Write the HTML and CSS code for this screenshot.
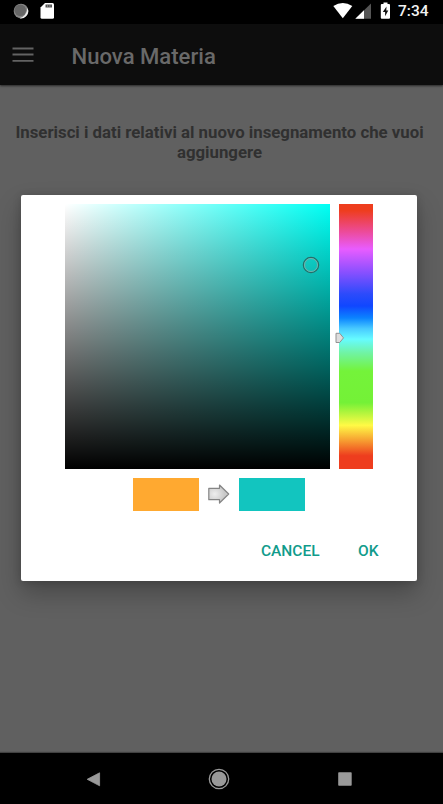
FILE: index.html
```
<!DOCTYPE html>
<html lang="it">
<head>
<meta charset="utf-8">
<title>Nuova Materia</title>
<link rel="stylesheet" href="styles.css">
</head>
<body>
<div class="screen">
  <header class="status">
    <svg class="status-left" width="60" height="24" viewBox="0 0 60 24">
      <circle cx="21" cy="11" r="7.3" fill="#888"/>
      <path d="M27.500 8a7.300 7.300 0 0 1-8 10.300q7-2 8-10.300z" fill="#eee"/>
      <circle cx="20.300" cy="10.300" r="5.800" fill="#666"/>
      <path d="M45 3h7.500q1.500 0 1.500 1.500v12.700q0 1.500-1.500 1.500h-10.500q-1.500 0-1.500-1.500v-9.700z" fill="#fff"/>
      <path d="M45.500 4.500h6.500v3h-6.500z" fill="#555"/>
      <path d="M47.500 4.500v3M49.900 4.500v3" stroke="#aaa" stroke-width=".6"/>
    </svg>
    <svg class="status-right" width="60" height="24" viewBox="0 0 60 24">
      <path d="M.3 6Q9.800 0 19.300 6L9.800 18.200z" fill="#fff"/>
      <path d="M22.300 18.800L38 3.500v15.300z" fill="#555"/>
      <path d="M22.300 18.800L31 10.300v8.500z" fill="#fff"/>
      <path d="M50.500 2.500h4v1.400h1.500q1 0 1 1v12.900q0 1-1 1h-7.200q-1 0-1-1V4.900q0-1 1-1h1.700z" fill="#fff"/>
      <path d="M53.500 6.400l-3.700 5.500h2.300v4.400l3.200-5.700h-2z" fill="#111"/>
    </svg>
    <span class="clock">7:34</span>
  </header>
  <div class="appbar">
    <svg width="22" height="16" viewBox="0 0 22 16"><path d="M.5 1.500h21M.5 7.500h21M.5 13.900h21" stroke="#636363" stroke-width="1.900"/></svg>
    <h1>Nuova Materia</h1>
  </div>
  <main class="content">
    <p class="intro">Inserisci i dati relativi al nuovo insegnamento che vuoi<br>aggiungere</p>
    <section class="dialog">
      <div class="picker">
        <div class="shade">
          <svg class="ring" width="18" height="18" viewBox="0 0 18 18" fill="none"><circle cx="9" cy="9" r="7.600" stroke="#266e69" stroke-width="1.300"/><circle cx="9" cy="9" r="6.500" stroke="#78b0aa"/></svg>
        </div>
        <div class="hue">
          <svg class="cursor" width="10" height="12" viewBox="0 0 10 12"><path d="M1 1.300h3.700L8.500 5.900 4.700 10.500H1z" fill="#ddd" stroke="#929292"/></svg>
        </div>
      </div>
      <div class="compare">
        <span class="swatch before"></span>
        <svg class="arrow" width="24" height="22" viewBox="0 0 24 22">
          <defs><radialGradient id="metal" cx=".3" cy=".5"><stop offset="0" stop-color="#eee"/><stop offset="1" stop-color="#c9c9c9"/></radialGradient></defs>
          <path d="M1.800 5.300h10.700V2l9.200 9-9.200 9v-3.300H1.800z" fill="url(#metal)" stroke="#858585" stroke-width="1.200" stroke-linejoin="round"/>
        </svg>
        <span class="swatch after"></span>
      </div>
      <div class="actions"><span class="cancel">CANCEL</span><span class="ok">OK</span></div>
    </section>
  </main>
  <nav class="navbar">
    <svg width="443" height="51" viewBox="0 0 443 51" fill="#999">
      <path d="M99.600 19.800v13L87.200 26.300z" stroke="#999" stroke-width=".8" stroke-linejoin="round"/>
      <circle cx="219" cy="26" r="7.500"/>
      <circle cx="219" cy="26" r="9.700" fill="none" stroke="#999" stroke-width="1.300"/>
      <rect x="338.200" y="19.300" width="13.500" height="13.500" rx=".8"/>
    </svg>
  </nav>
</div>
</body>
</html>
```
FILE: styles.css
```
body {
  margin: 0;
  font-family: Roboto, "Liberation Sans", sans-serif;
}
.screen {
  width: 443px;
  height: 804px;
  overflow: hidden;
  display: flex;
  flex-direction: column;
  background: #606060;
}
.status {
  height: 24px;
  background: #000;
  display: flex;
}
.status-right { margin-left: 273px; }
.clock {
  margin-left: 5px;
  color: #f2f2f2;
  font-size: 15.500px;
  font-weight: 500;
  line-height: 22px;
}
.appbar {
  height: 61px;
  box-sizing: border-box;
  padding-left: 12px;
  display: flex;
  align-items: center;
  gap: 37.500px;
  background: #0d0d0d;
  box-shadow: 0 1px 2px rgba(0, 0, 0, .6);
}
.appbar h1 {
  margin: 3px 0 0;
  color: #696969;
  font-size: 22.100px;
  line-height: 26px;
  font-weight: 500;
}
.content { flex: 1; }
.intro {
  margin: 37px 4px 0 0;
  height: 73px;
  text-align: center;
  font-size: 16.800px;
  line-height: 20px;
  font-weight: 700;
  color: #303030;
  white-space: nowrap;
}
.dialog {
  width: 396px;
  height: 386px;
  margin-left: 21.300px;
  box-sizing: border-box;
  padding-top: 9px;
  border-radius: 2px;
  background: #fff;
  box-shadow: 0 12px 24px rgba(0, 0, 0, .26), 0 1px 8px rgba(0, 0, 0, .16);
}
.picker {
  display: flex;
  gap: 9px;
  padding-left: 44.100px;
}
.shade {
  position: relative;
  width: 265px;
  height: 264.500px;
  background: linear-gradient(to top, #000, transparent), linear-gradient(to right, #fff, #00fff4);
}
.ring {
  position: absolute;
  left: 236.500px;
  top: 52px;
}
.hue {
  position: relative;
  width: 33.500px;
  height: 264.500px;
  background: linear-gradient(#ee3d1e 2.500%, #ec4b9a 10.500%, #e85cff 17%, #8c50ff 25.500%, #2c4bfb 34%, #1047ff 38.500%, #0b83ff 43%, #48caff 47%, #66fbff 51%, #70f3a7 56%, #74f33a 63%, #74f137 75%, #fffa45 83.500%, #f69a30 89.500%, #ee3d1e 95%);
}
.cursor {
  position: absolute;
  left: -4px;
  top: 128px;
}
.compare {
  display: flex;
  margin: 9px 0 0 111.300px;
  height: 33px;
}
.swatch { width: 66.300px; }
.before { background: #ffa930; }
.after { background: #12c5bf; }
.arrow { margin: 5.500px 8px 0 7.700px; }
.actions {
  display: flex;
  margin: 30px 0 0 239.600px;
  gap: 38.500px;
  font-size: 15.500px;
  line-height: 20px;
  font-weight: 500;
  color: #109b8b;
}
.navbar {
  height: 51px;
  background: #000;
  box-shadow: 0 -1px 1px #414141;
}
.navbar svg { display: block; }
```
